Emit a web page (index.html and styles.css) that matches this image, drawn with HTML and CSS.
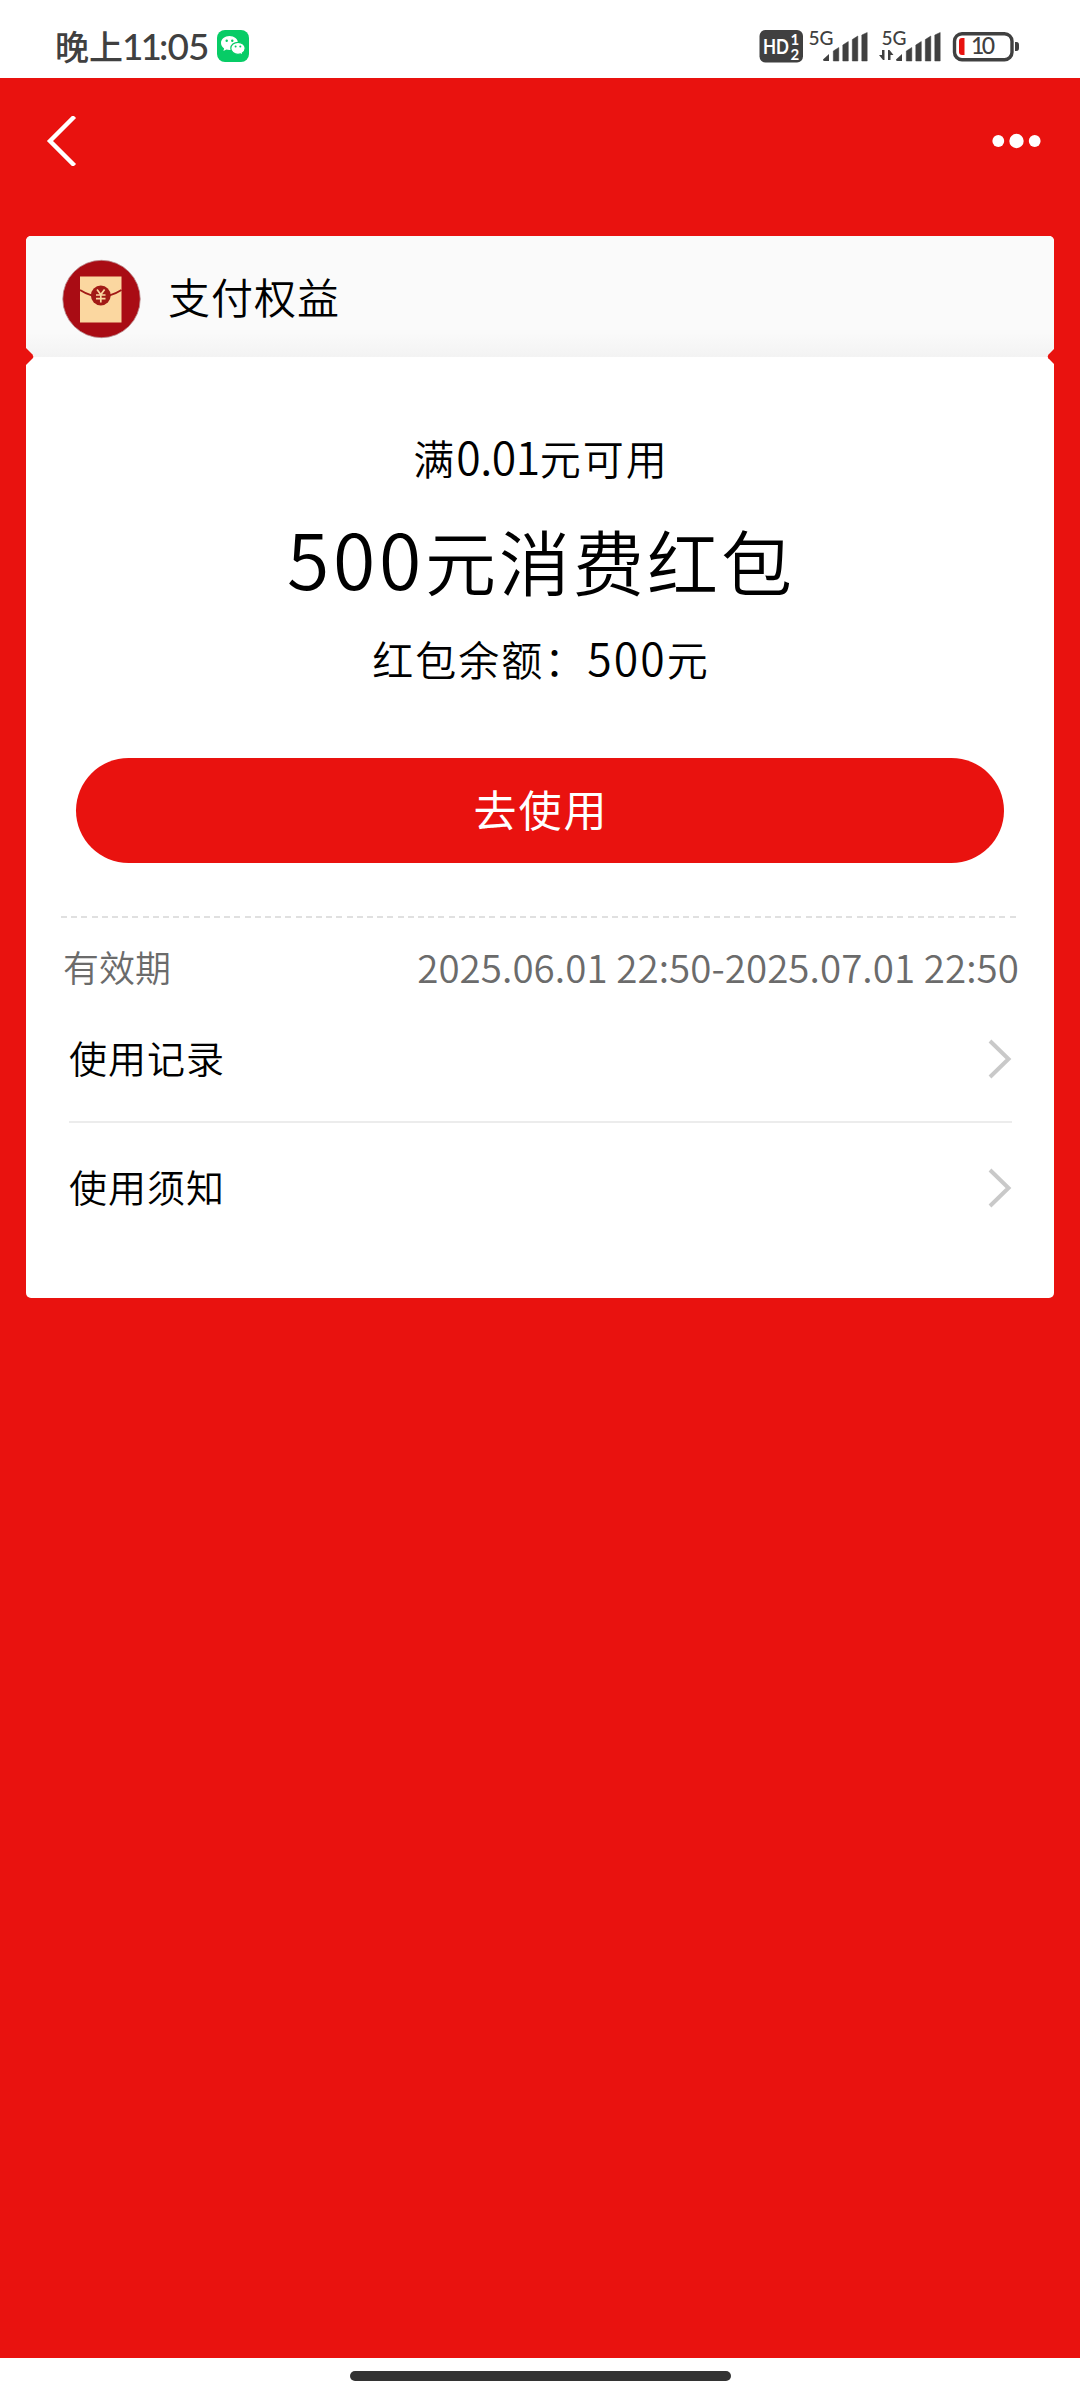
FILE: index.html
```html
<!DOCTYPE html>
<html lang="zh-CN">
<head>
<meta charset="utf-8">
<title>支付权益</title>
<link rel="stylesheet" href="styles.css">
</head>
<body>
<div class="screen">
  <header class="status">
    <div class="clock">晚上<span class="num"><span class="tight">11</span>:05</span></div>
    <svg class="wechat" width="32" height="32" viewBox="0 0 32 32">
      <rect width="32" height="32" rx="8" fill="#07cc66"/>
      <path d="M12.500 6C7.800 6 4 9.100 4 13c0 2.200 1.200 4.100 3.100 5.400L6.400 21l3-1.500c1 .3 2 .5 3.100.5 4.700 0 8.500-3.100 8.500-7S17.200 6 12.500 6z" fill="#fff"/>
      <path d="M21 12.300c-4 0-7.200 2.700-7.200 6s3.200 6 7.200 6c.9 0 1.700-.1 2.500-.4l2.600 1.300-.7-2.300c1.700-1.100 2.800-2.700 2.800-4.600 0-3.300-3.200-6-7.200-6z" fill="#fff" stroke="#07cc66" stroke-width="1.200"/>
      <g fill="#07cc66"><circle cx="9.700" cy="10.800" r="1.200"/><circle cx="15.300" cy="10.800" r="1.200"/><circle cx="18.600" cy="16.500" r="1"/><circle cx="23.300" cy="16.500" r="1"/></g>
    </svg>
    <svg class="indicators" width="262" height="44" viewBox="758 24 262 44">
      <rect x="759.500" y="30" width="43.500" height="32.500" rx="6" fill="#404040"/>
      <g class="hd"><text x="763" y="53.500" font-size="20" textLength="26" lengthAdjust="spacingAndGlyphs">HD</text><text x="790.500" y="44.500" font-size="15">1</text><text x="790.500" y="59.500" font-size="15">2</text></g>
      <g class="net"><text x="808.500" y="45" font-size="19" textLength="25" lengthAdjust="spacingAndGlyphs">5G</text><text x="881.500" y="45" font-size="19" textLength="25" lengthAdjust="spacingAndGlyphs">5G</text></g>
      <g id="bars" fill="#404040">
        <path d="M823 59.500 829 54V61H824.500Q823 61 823 59.500z"/>
        <path d="M833.300 51 838.800 47.500V61H833.300zM842.800 45 848.300 41.500V61H842.800zM852.300 39.500 857.800 36V61H852.300zM861.800 35 867.200 32.500V61H861.800z" stroke="#404040" stroke-width=".5" stroke-linejoin="round"/>
      </g>
      <use href="#bars" x="73"/>
      <path d="M884.500 50v10h-1.500l-4-5h3V50zM888 60V50h1.500l4 5h-3v5z" fill="#404040"/>
      <rect x="954.500" y="33.700" width="57.500" height="26" rx="7.500" fill="none" stroke="#404040" stroke-width="3.400"/>
      <path d="M1015 42h1.500q2.500 0 2.500 3v3q0 3-2.500 3H1015z" fill="#404040"/>
      <path d="M962 38h2.500v17H962q-3 0-3-3V41q0-3 3-3z" fill="#e8120f"/>
      <text class="level" x="971" y="54" font-size="23" textLength="24">10</text>
    </svg>
  </header>

  <main class="page">
    <nav class="nav">
      <svg width="32" height="50" viewBox="0 0 32 50"><path d="M28.500.500 4 25 28.500 49.500" fill="none" stroke="#fff" stroke-width="4.400"/></svg>
      <svg width="50" height="16" viewBox="0 0 50 16" fill="#fff"><circle cx="6.300" cy="8" r="5.900"/><circle cx="24.500" cy="8" r="7.200"/><circle cx="42.700" cy="8" r="5.900"/></svg>
    </nav>

    <section class="card">
      <div class="brand">
        <svg width="80" height="80" viewBox="0 0 80 80">
          <circle cx="40.500" cy="40" r="38.700" fill="#a90c14" stroke="#b8898c" stroke-width=".8"/>
          <path d="M19 17.500h41.500v46H19z" fill="#fbd7a0"/>
          <path d="M19 31Q39.500 44 60.500 31" fill="none" stroke="#a21a16" stroke-width="2"/>
          <circle cx="39.800" cy="36.500" r="9.900" fill="#a21a16"/>
          <path d="M36 30.500 39.800 35.500 43.600 30.500M39.800 35.500V43.500M35 36H44.500M35 39.700H44.500" fill="none" stroke="#fbd7a0" stroke-width="1.700"/>
        </svg>
        <h1 class="title">支付权益</h1>
      </div>
      <svg class="notch notch-left" width="8" height="17" viewBox="0 0 8 17"><path d="M0 0 6.500 6.500Q8 8.500 6.500 10.500L0 17z" fill="#e9120f"/></svg>
      <svg class="notch notch-right" width="7" height="15" viewBox="0 0 8 17"><path d="M8 0 1.500 6.500Q0 8.500 1.500 10.500L8 17z" fill="#e9120f"/></svg>
      <div class="offer">
        <p class="line cond">满<span class="fig decimal">0.01</span>元可用</p>
        <p class="line amount"><span class="fig">500</span>元消费红包</p>
        <p class="line cond">红包余额：<span class="fig">500</span>元</p>
      </div>
      <button class="use">去使用</button>
      <div class="dash"></div>
      <div class="validity"><span class="label">有效期</span><span class="fig">2025.06.01 22:50-2025.07.01 22:50</span></div>
      <div class="row row-first"><span class="label">使用记录</span><svg width="24" height="40" viewBox="0 0 24 40"><path d="M2 2 20.500 20 2 38" fill="none" stroke="#c9c9c9" stroke-width="4"/></svg></div>
      <div class="row"><span class="label">使用须知</span><svg width="24" height="40" viewBox="0 0 24 40"><path d="M2 2 20.500 20 2 38" fill="none" stroke="#c9c9c9" stroke-width="4"/></svg></div>
    </section>
  </main>
  <footer class="home"><div class="pill"></div></footer>
</div>
</body>
</html>
```
FILE: styles.css
```css
* { box-sizing: border-box; }
body { margin: 0; background: #fff; color: #000; font-family: "Noto Sans CJK SC", sans-serif; font-weight: 350; }
p, h1 { margin: 0; font-weight: inherit; }
svg { display: block; flex: none; }
.num { font-family: Lato, "Noto Sans CJK SC", sans-serif; }
.label { padding-bottom: 4px; }
.screen { width: 1080px; height: 2400px; display: flex; flex-direction: column; }

.status { height: 78px; padding: 14px 60px 0 55px; display: flex; align-items: center; }
.clock { font-size: 34px; line-height: 63px; height: 64px; color: #404040; font-weight: 500; white-space: nowrap; width: 162px; }
.clock .num { font-size: 37px; font-weight: 500; letter-spacing: -.8px; }
.clock .tight { letter-spacing: -3px; margin-left: -1px; }
.indicators { margin-left: auto; font-family: Lato, sans-serif; }
.hd { fill: #fff; font-weight: 700; }
.net, .level { fill: #404040; font-weight: 500; }

.page { flex: 1; background: #e9120f; padding: 0 26px; }
.nav { height: 158px; padding: 38px 12px 70px 20px; display: flex; justify-content: space-between; align-items: center; }
.card { position: relative; height: 1062px; background: #fff; border-radius: 5px; overflow: hidden; }
.brand { height: 121px; padding: 4px 0 0 35px; display: flex; align-items: center; gap: 27px; background: linear-gradient(#fafafa 80%, #f3f3f3); }
.title { font-size: 42px; line-height: 60px; letter-spacing: 1px; padding-bottom: 5px; }
.notch { position: absolute; top: 112px; }
.notch-left { left: 0; }
.notch-right { right: 0; top: 113px; }

.offer { height: 401px; padding: 67px 0 0 2px; text-align: center; }
.line { white-space: nowrap; }
.cond { font-size: 41px; letter-spacing: 2px; height: 64px; line-height: 63px; }
.cond .fig { font-size: 44.500px; }
.cond .decimal { letter-spacing: -.4px; }
.amount { font-size: 71px; letter-spacing: 3px; height: 137px; line-height: 138px; }
.amount .fig { font-size: 77px; letter-spacing: 3.700px; }
.use { display: block; width: 928px; height: 105px; margin: 0 auto; padding: 0 0 5px 2px; border: 0; border-radius: 53px; background: #e9120f; color: #fff; font: 400 43px/96px "Noto Sans CJK SC", sans-serif; letter-spacing: 2px; }
.dash { height: 2px; margin: 53px 35px 0; background: repeating-linear-gradient(90deg, #e0e0e0 0 6px, #fff 6px 10.200px); }
.validity { height: 100px; padding: 0 35px 0 37px; display: flex; justify-content: space-between; align-items: center; font-size: 36px; line-height: 54px; color: #6b6b6b; white-space: nowrap; }
.validity .fig { font-size: 38.500px; letter-spacing: .06px; padding-bottom: 4px; }
.row { height: 132px; margin: 0 42px 0 43px; padding: 0 0 2px; display: flex; justify-content: space-between; align-items: center; font-size: 38px; letter-spacing: 1px; line-height: 56px; }
.row-first { height: 105px; padding: 0 0 22px; border-bottom: 2px solid #ececec; }

.home { height: 42px; padding-top: 13px; }
.pill { width: 381px; height: 10px; margin: 0 auto; border-radius: 5px; background: #333; }
```
